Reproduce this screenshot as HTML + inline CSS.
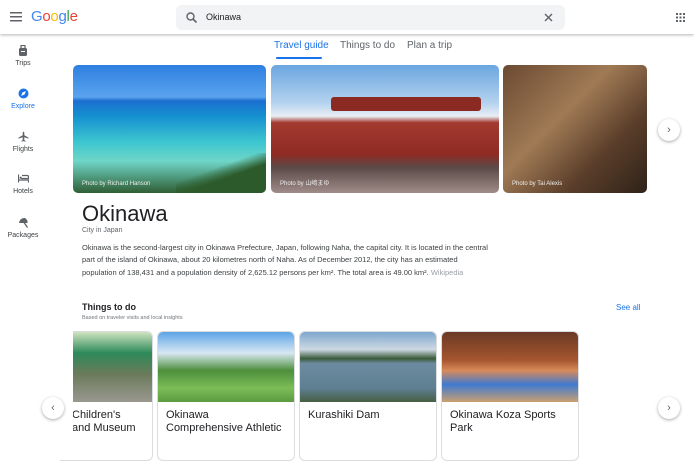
<!DOCTYPE html>
<html><head><style>
*{margin:0;padding:0;box-sizing:border-box}
body{width:694px;height:431px;overflow:hidden;background:#fff;font-family:"Liberation Sans",Arial,sans-serif;position:relative;color:#202124}
.a{position:absolute}
.hdr{left:0;top:0;width:694px;height:34px;background:#fff;box-shadow:0 1px 3px rgba(0,0,0,.3);z-index:5}
.nav{left:0;width:46px;text-align:center;font-size:7px;color:#3c4043}
.img{border-radius:5px;overflow:hidden}
.cap{position:absolute;left:9px;bottom:6px;font-size:6px;color:#eee}
.circ{width:22px;height:22px;border-radius:50%;background:#fff;box-shadow:0 1px 3px rgba(0,0,0,.35);text-align:center;line-height:22px;font-size:11px;color:#5f6368}
.card{top:331px;height:130px;border:1px solid #dadce0;border-radius:6px;overflow:hidden;background:#fff}
.card .ph{height:70px}
.card .t{padding:7px 8px;font-size:11px;line-height:13px;color:#202124}
</style></head><body>
<div class="a hdr">
 <svg class="a" style="left:10px;top:12px" width="12" height="10"><rect y="0" width="12" height="1.5" fill="#5f6368"/><rect y="4" width="12" height="1.5" fill="#5f6368"/><rect y="8" width="12" height="1.5" fill="#5f6368"/></svg>
 <div class="a" style="left:31px;top:8px;font-size:15px;letter-spacing:-.3px"><span style="color:#4285f4">G</span><span style="color:#ea4335">o</span><span style="color:#fbbc05">o</span><span style="color:#4285f4">g</span><span style="color:#34a853">l</span><span style="color:#ea4335">e</span></div>
 <div class="a" style="left:176px;top:5px;width:389px;height:25px;background:#f1f3f4;border-radius:6px">
  <svg class="a" style="left:10px;top:7px" width="11" height="11"><circle cx="4.5" cy="4.5" r="3.5" stroke="#5f6368" stroke-width="1.4" fill="none"/><line x1="7" y1="7" x2="10.5" y2="10.5" stroke="#5f6368" stroke-width="1.6"/></svg>
  <div class="a" style="left:30px;top:7px;font-size:9px">Okinawa</div>
  <svg class="a" style="left:368px;top:8px" width="9" height="9"><path d="M1 1L8 8M8 1L1 8" stroke="#5f6368" stroke-width="1.4"/></svg>
 </div>
 <svg class="a" style="left:676px;top:13px" width="9" height="9" fill="#5f6368"><rect x="0" y="0" width="2" height="2"/><rect x="3.5" y="0" width="2" height="2"/><rect x="7" y="0" width="2" height="2"/><rect x="0" y="3.5" width="2" height="2"/><rect x="3.5" y="3.5" width="2" height="2"/><rect x="7" y="3.5" width="2" height="2"/><rect x="0" y="7" width="2" height="2"/><rect x="3.5" y="7" width="2" height="2"/><rect x="7" y="7" width="2" height="2"/></svg>
</div>
<div class="a nav" style="top:45px"><svg width="10" height="11"><rect x="1" y="3" width="8" height="8" rx="1.5" fill="#5f6368"/><rect x="3" y="0.5" width="4" height="3" fill="none" stroke="#5f6368" stroke-width="1.2"/><rect x="3" y="6" width="4" height="1" fill="#fff"/></svg><div style="margin-top:2px">Trips</div></div>
<div class="a nav" style="top:88px;color:#1a73e8"><svg width="11" height="11"><circle cx="5.5" cy="5.5" r="5" fill="#1a73e8"/><path d="M3 8L4.5 4.5L8 3L6.5 6.5Z" fill="#fff"/></svg><div style="margin-top:2px">Explore</div></div>
<div class="a nav" style="top:131px"><svg width="11" height="11"><path d="M5.5 0.5L6.3 1.5V4.2L10.5 6.6V7.6L6.3 6.3V9L7.5 10V10.7L5.5 10.1L3.5 10.7V10L4.7 9V6.3L0.5 7.6V6.6L4.7 4.2V1.5Z" fill="#5f6368"/></svg><div style="margin-top:2px">Flights</div></div>
<div class="a nav" style="top:174px"><svg width="11" height="9"><path d="M0.5 0.5V8.5M0.5 6H10.5V8.5M3.5 4.5H10.5V2.5Q10.5 1.5 9 1.5H4" stroke="#5f6368" stroke-width="1.2" fill="none"/><circle cx="2.7" cy="3.7" r="1.1" fill="#5f6368"/></svg><div style="margin-top:3px">Hotels</div></div>
<div class="a nav" style="top:217px"><svg width="11" height="11"><path d="M1 6Q2 0.5 7 1Q10 3 9.5 6Z" fill="#5f6368"/><path d="M5 4L9.5 10.5" stroke="#5f6368" stroke-width="1.3"/></svg><div style="margin-top:2px">Packages</div></div>
<div class="a" style="left:274px;top:40px;font-size:10px;color:#1a73e8">Travel guide</div>
<div class="a" style="left:276px;top:57px;width:46px;height:2px;background:#1a73e8;border-radius:2px"></div>
<div class="a" style="left:340px;top:40px;font-size:10px;color:#5f6368">Things to do</div>
<div class="a" style="left:407px;top:40px;font-size:10px;color:#5f6368">Plan a trip</div>
<div class="a img" style="left:73px;top:65px;width:193px;height:128px;background:linear-gradient(180deg,#2d7fe0 0%,#5aa3ee 25%,#1c6fd0 28%,#1590d0 40%,#3cc6d0 60%,#6fd6c8 75%,#2f5e34 100%)"><div class="a" style="right:0;bottom:0;width:90px;height:40px;background:linear-gradient(160deg,rgba(0,0,0,0) 40%,#2d5a2a 60%)"></div><div class="cap">Photo by Richard Hanson</div></div>
<div class="a img" style="left:271px;top:65px;width:228px;height:128px;background:linear-gradient(180deg,#6aa6e0 0%,#b6d3ef 30%,#e9eef3 40%,#a33a30 45%,#8e2b24 70%,#5a4a48 80%,#a08c88 100%)"><div class="a" style="left:60px;top:32px;width:150px;height:14px;background:#8a2a22;border-radius:3px"></div><div class="cap">Photo by 山﨑まゆ</div></div>
<div class="a img" style="left:503px;top:65px;width:144px;height:128px;background:linear-gradient(135deg,#6b4a32,#a07a55 40%,#5a3e2a 70%,#2e2218)"><div class="cap">Photo by Tai Alexis</div></div>
<div class="a circ" style="left:658px;top:119px">›</div>
<div class="a" style="left:82px;top:201px;font-size:22px;color:#202124">Okinawa</div>
<div class="a" style="left:82px;top:227px;font-size:7px;color:#5f6368">City in Japan</div>
<div class="a" style="left:82px;top:242px;white-space:nowrap;font-size:7.5px;line-height:12.3px;color:#3c4043">Okinawa is the second-largest city in Okinawa Prefecture, Japan, following Naha, the capital city. It is located in the central<br>part of the island of Okinawa, about 20 kilometres north of Naha. As of December 2012, the city has an estimated<br>population of 138,431 and a population density of 2,625.12 persons per km². The total area is 49.00 km². <span style="color:#9aa0a6">Wikipedia</span></div>
<div class="a" style="left:82px;top:302px;font-size:9px;font-weight:bold;color:#202124">Things to do</div>
<div class="a" style="left:82px;top:315px;font-size:5.5px;color:#70757a">Based on traveler visits and local insights</div>
<div class="a" style="left:616px;top:303px;font-size:8px;color:#1a73e8">See all</div>
<div class="a card" style="left:60px;width:93px;border-left:none;border-radius:0 6px 6px 0"><div class="ph" style="background:linear-gradient(180deg,#cfe3c0,#2d8a5a 30%,#6a7a5a 60%,#9a9890)"></div><div class="t" style="padding-left:12px">Children's<br>and Museum</div></div>
<div class="a card" style="left:157px;width:138px"><div class="ph" style="background:linear-gradient(180deg,#5ca4e6,#d8e8f3 30%,#4d8f3c 55%,#7cbd57 80%,#5c9a40)"></div><div class="t">Okinawa<br>Comprehensive Athletic</div></div>
<div class="a card" style="left:299px;width:138px"><div class="ph" style="background:linear-gradient(180deg,#7ea7cf,#cdd9e2 25%,#3a5a3a 38%,#6d8ba0 45%,#5e7f92 80%,#485f44)"></div><div class="t">Kurashiki Dam</div></div>
<div class="a card" style="left:441px;width:138px"><div class="ph" style="background:linear-gradient(180deg,#6b3a26,#a5552e 40%,#d88a5a 55%,#3f7ad0 75%,#caa070)"></div><div class="t">Okinawa Koza Sports<br>Park</div></div>
<div class="a" style="left:46px;top:331px;width:27px;height:100px;background:#fff"></div>
<div class="a circ" style="left:42px;top:397px">‹</div>
<div class="a circ" style="left:658px;top:397px">›</div>
</body></html>
